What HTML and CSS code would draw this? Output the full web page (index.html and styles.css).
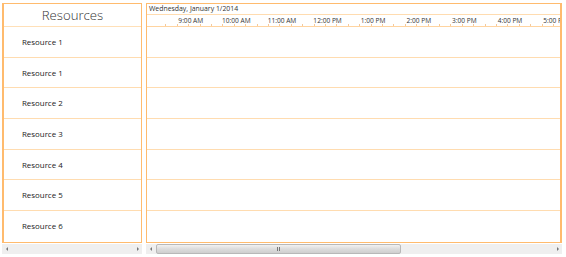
FILE: index.html
```html
<!DOCTYPE html>
<html>
<head>
<meta charset="utf-8">
<link rel="stylesheet" href="styles.css">
</head>
<body>
<div class="app">
  <div class="side">
    <div class="panel res-panel">
      <div class="res-head">Resources</div>
      <div class="res-row">Resource 1</div>
      <div class="res-row">Resource 1</div>
      <div class="res-row">Resource 2</div>
      <div class="res-row">Resource 3</div>
      <div class="res-row">Resource 4</div>
      <div class="res-row">Resource 5</div>
      <div class="res-row last">Resource 6</div>
    </div>
    <div class="hscroll">
      <span class="arrow left"></span>
      <span class="track"></span>
      <span class="arrow right"></span>
    </div>
  </div>
  <div class="main">
    <div class="panel time-panel">
      <div class="date-row">Wednesday, January 1/2014</div>
      <div class="hours-row">
        <span class="lead"></span>
        <span class="hour">9:00 AM</span>
        <span class="hour">10:00 AM</span>
        <span class="hour">11:00 AM</span>
        <span class="hour">12:00 PM</span>
        <span class="hour">1:00 PM</span>
        <span class="hour">2:00 PM</span>
        <span class="hour">3:00 PM</span>
        <span class="hour">4:00 PM</span>
        <span class="hour">5:00 PM</span>
      </div>
      <div class="lane"></div>
      <div class="lane"></div>
      <div class="lane"></div>
      <div class="lane"></div>
      <div class="lane"></div>
      <div class="lane"></div>
      <div class="lane last"></div>
    </div>
    <div class="hscroll">
      <span class="arrow left"></span>
      <span class="track"><span class="thumb"><span class="grip"></span></span></span>
      <span class="arrow right"></span>
    </div>
  </div>
</div>
</body>
</html>
```

FILE: styles.css
```css
* { box-sizing: border-box; }
html, body { margin: 0; padding: 0; background: #fff; }
body {
  width: 566px;
  height: 257px;
  overflow: hidden;
  font-family: "Open Sans", "Noto Sans", sans-serif;
  color: #333;
}
.app {
  display: flex;
  gap: 4px;
  padding: 3px 4px 0 2px;
}
.side { width: 140px; display: flex; flex-direction: column; }
.main { flex: 1; display: flex; flex-direction: column; min-width: 0; }
.panel {
  border: 1px solid #ffbb6e;
  border-left-width: 2px;
  height: 240px;
  overflow: hidden;
}
.res-head {
  height: 23px;
  border-bottom: 1px solid #ffe0b8;
  text-align: center;
  font-size: 13.2px;
  font-weight: 300;
  line-height: 23px;
  color: #333;
}
.res-row {
  height: 30.7px;
  border-bottom: 1px solid #ffdcb0;
  font-size: 7.9px;
  line-height: 30px;
  padding-left: 18px;
  color: #222;
}
.res-row.last, .lane.last { border-bottom: none; }
.time-panel { border-left-width: 1px; border-right-width: 2px; }
.date-row {
  height: 11px;
  border-bottom: 1px solid #ffdcb0;
  font-size: 6.9px;
  line-height: 10px;
  padding-left: 2px;
  color: #333;
}
.hours-row {
  height: 12px;
  display: flex;
  border-bottom: 1px solid #ffd4a0;
  background-image: repeating-linear-gradient(to right, transparent 0, transparent 10.5px, #f5c99a 10.5px, #f5c99a 11.4px);
  background-size: 100% 2px;
  background-repeat: no-repeat;
  background-position: 8px bottom;
  white-space: nowrap;
}
.lead { flex: 0 0 21px; }
.hour {
  flex: 0 0 45.6px;
  text-align: center;
  font-size: 6.6px;
  line-height: 11px;
  color: #333;
}
.lane {
  height: 30.7px;
  border-bottom: 1px solid #ffdcb0;
}
.hscroll {
  height: 10px;
  margin-top: 1px;
  background: #efefef;
  display: flex;
  align-items: center;
}
.arrow { flex: 0 0 9px; height: 10px; display: flex; align-items: center; justify-content: center; }
.arrow::before {
  content: "";
  width: 0; height: 0;
  border-top: 2px solid transparent;
  border-bottom: 2px solid transparent;
}
.arrow.left::before { border-right: 2px solid #777; }
.arrow.right::before { border-left: 2px solid #777; }
.track { flex: 1; height: 10px; display: flex; align-items: stretch; }
.thumb {
  width: 245px;
  margin: 0 0 0 1px;
  height: 10px;
  border: 1px solid #b8b8b8;
  border-radius: 2px;
  background: linear-gradient(#f2f2f2, #dcdcdc 50%, #cfcfcf);
  display: flex;
  align-items: center;
  justify-content: center;
}
.grip {
  width: 4px; height: 4px;
  background: repeating-linear-gradient(to right, #777 0, #777 1px, transparent 1px, transparent 2px);
}
```
